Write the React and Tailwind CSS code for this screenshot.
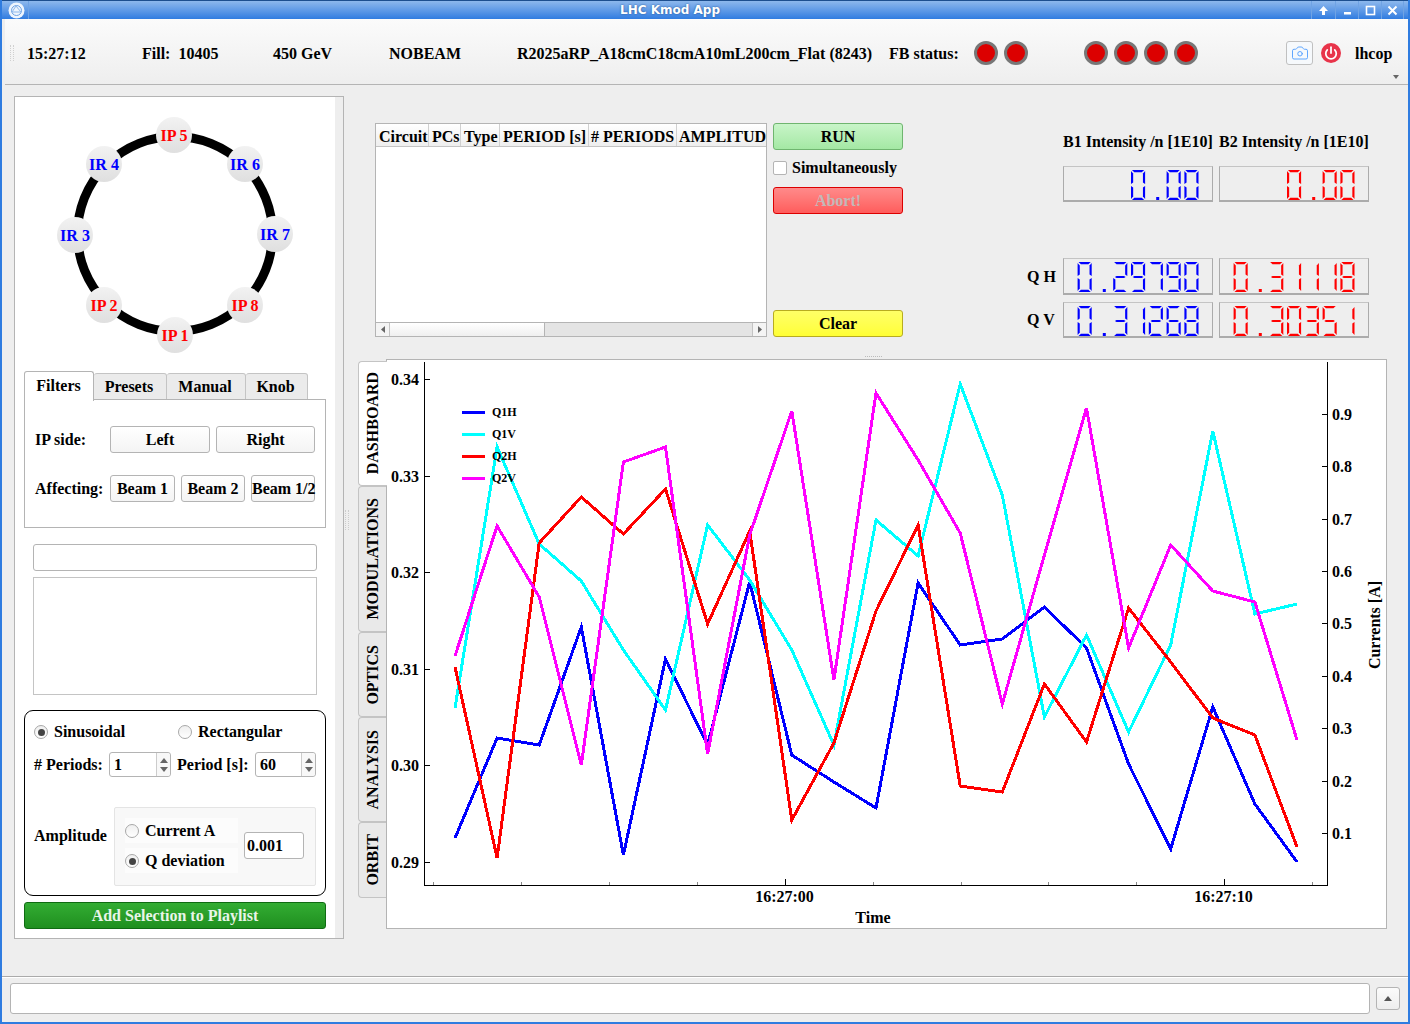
import React from 'react';
import { Camera, Power } from 'lucide-react';

const xs = Array.from({ length: 21 }, (_, i) => 455 + i * 42.1);

const series = [
    { color: '#0000ff', ys: [838, 738, 745, 627, 855, 659, 745, 582, 755, 782, 808, 583, 645, 639, 607, 648, 764, 849, 707, 804, 862] },
    { color: '#00ffff', ys: [708, 447, 544, 581, 650, 710, 525, 580, 650, 745, 520, 556, 384, 495, 717, 635, 732, 645, 431, 614, 604] },
    { color: '#ff0000', ys: [667, 858, 543, 497, 534, 489, 624, 531, 820, 743, 611, 525, 786, 792, 684, 742, 608, 662, 718, 735, 847] },
    { color: '#ff00ff', ys: [656, 526, 597, 765, 462, 447, 754, 535, 411, 680, 393, 460, 533, 704, 555, 408, 648, 545, 591, 602, 740] },
];

const legend = [
    { label: 'Q1H', color: '#0000ff', y: 412 },
    { label: 'Q1V', color: '#00ffff', y: 434 },
    { label: 'Q2H', color: '#ff0000', y: 456 },
    { label: 'Q2V', color: '#ff00ff', y: 478 },
];

const leftTicks = [['0.34', 379], ['0.33', 476], ['0.32', 572], ['0.31', 669], ['0.30', 765], ['0.29', 862]];
const rightTicks = [['0.9', 414], ['0.8', 466], ['0.7', 519], ['0.6', 571], ['0.5', 623], ['0.4', 676], ['0.3', 728], ['0.2', 781], ['0.1', 833]];
const bottomTicks = [433, 521, 609, 697, 785, 873, 961, 1048, 1136, 1224, 1312];

const ringNodes = [
    { label: 'IP 5', text: 'text-[#ff0000]', pos: 'left-[141px] top-[20px]' },
    { label: 'IR 4', text: 'text-[#0000ff]', pos: 'left-[71px] top-[49px]' },
    { label: 'IR 6', text: 'text-[#0000ff]', pos: 'left-[212px] top-[49px]' },
    { label: 'IR 3', text: 'text-[#0000ff]', pos: 'left-[42px] top-[120px]' },
    { label: 'IR 7', text: 'text-[#0000ff]', pos: 'left-[242px] top-[119px]' },
    { label: 'IP 2', text: 'text-[#ff0000]', pos: 'left-[71px] top-[190px]' },
    { label: 'IP 8', text: 'text-[#ff0000]', pos: 'left-[212px] top-[190px]' },
    { label: 'IP 1', text: 'text-[#ff0000]', pos: 'left-[142px] top-[220px]' },
];

const plotTabs = [
    { label: 'MODULATIONS', h: 'h-[146px]' },
    { label: 'OPTICS', h: 'h-[85px]' },
    { label: 'ANALYSIS', h: 'h-[105px]' },
    { label: 'ORBIT', h: 'h-[76px]' },
];

const tableCols = [
    { label: 'Circuit', w: 'w-[53px] pl-[3px]' },
    { label: 'PCs', w: 'w-[32px] pl-[3px]' },
    { label: 'Type', w: 'w-[39px] pl-[3px]' },
    { label: 'PERIOD [s]', w: 'w-[89px] pl-[3px]' },
    { label: '# PERIODS', w: 'w-[88px] pl-[2px]' },
    { label: 'AMPLITUDE', w: 'flex-1 pl-[2px]' },
];

// seven segment shapes for a 15x30 cell
const segments = {
    a: '1,0 14,0 11.5,2.3 3.5,2.3',
    b: '15,1 15,14 12.7,12.5 12.7,3.5',
    c: '15,16 15,29 12.7,26.5 12.7,17.5',
    d: '1,30 14,30 11.5,27.7 3.5,27.7',
    e: '0,16 0,29 2.3,26.5 2.3,17.5',
    f: '0,1 0,14 2.3,12.5 2.3,3.5',
    g: '1.8,15 3.5,13.9 11.5,13.9 13.2,15 11.5,16.1 3.5,16.1',
};

const digitSegments = {
    0: 'abcdef',
    1: 'bc',
    2: 'abged',
    3: 'abgcd',
    4: 'fgbc',
    5: 'afgcd',
    6: 'afgcde',
    7: 'abc',
    8: 'abcdefg',
    9: 'abcdfg',
};

const LcdNumber = ({ value, color, height }) => {
    const chars = value.split('');
    return (
        <div className={`relative w-[150px] ${height} border border-[#ababab] border-b-2 border-t-[#c4c4c4]`}>
            <svg width="148" height="33" aria-hidden="true">
                {chars.map((ch, i) => {
                    const x = 119.8 - (chars.length - 1 - i) * 17.8;
                    if (ch === '.') {
                        return <rect key={i} x={x + 8} y="30" width="3" height="3" fill={color} />;
                    }
                    return (
                        <g key={i} transform={`translate(${x + 0.6} 3) scale(0.94 1)`}>
                            {digitSegments[ch].split('').map((s) => (
                                <polygon key={s} points={segments[s]} fill={color} />
                            ))}
                        </g>
                    );
                })}
            </svg>
            {/* the reading itself stays selectable text on top of the segments */}
            <span className="absolute inset-0 flex items-center justify-end pr-[12px] text-transparent select-text">{value}</span>
        </div>
    );
};

const Led = () => (
    <div className="w-[24px] h-[24px] rounded-full border-[3px] border-[#777777] bg-[#dc0000] shrink-0" />
);

const Radio = ({ checked }) => (
    <span className="w-[14px] h-[14px] rounded-full border border-[#a8a8a8] bg-gradient-to-b from-[#efefef] to-white flex items-center justify-center shrink-0">
        {checked && <span className="w-[7px] h-[7px] rounded-full bg-[#444444]" />}
    </span>
);

const Spin = ({ value, width }) => (
    <div className={`${width} h-[25px] border border-[#b4b4b4] rounded-[3px] bg-white flex items-center`}>
        <span className="flex-1 pl-[4px]">{value}</span>
        <div className="w-[14px] h-full border-l border-[#cccccc] flex flex-col items-center justify-center gap-[4px] bg-[#f8f8f8] rounded-r-[3px]">
            <svg width="8" height="5"><path d="M4 0 L8 5 L0 5 Z" fill="#666666" /></svg>
            <svg width="8" height="5"><path d="M0 0 L8 0 L4 5 Z" fill="#666666" /></svg>
        </div>
    </div>
);

const PlainButton = ({ label, width }) => (
    <button className={`${width} h-[27px] border border-[#b4b4b4] rounded-[3px] bg-gradient-to-b from-white to-[#f4f4f4] whitespace-nowrap font-bold`}>
        {label}
    </button>
);

const Chart = () => (
    <svg width="999" height="568" className="block">
        <g transform="translate(-387 -360)" fontFamily="Liberation Serif, serif" fontWeight="700">
            <path d="M424.5 362 V885.5 H1327.5 V362" fill="none" stroke="#000000" strokeWidth="1" shapeRendering="crispEdges" />
            {leftTicks.map(([label, y]) => (
                <g key={label}>
                    <line x1="425" x2="430" y1={y + 0.5} y2={y + 0.5} stroke="#000000" shapeRendering="crispEdges" />
                    <text x="391" y={y + 6} fontSize="16">{label}</text>
                </g>
            ))}
            {rightTicks.map(([label, y]) => (
                <g key={label}>
                    <line x1="1322" x2="1327" y1={y + 0.5} y2={y + 0.5} stroke="#000000" shapeRendering="crispEdges" />
                    <text x="1332" y={y + 6} fontSize="16">{label}</text>
                </g>
            ))}
            {bottomTicks.map((x) => {
                const major = x === 785 || x === 1224;
                return (
                    <line key={x} x1={x + 0.5} x2={x + 0.5} y1={major ? 879 : 882} y2="885" stroke={major ? '#000000' : '#888888'} shapeRendering="crispEdges" />
                );
            })}
            {series.map((s) => (
                <polyline
                    key={s.color}
                    points={s.ys.map((y, i) => `${xs[i]},${y}`).join(' ')}
                    fill="none"
                    stroke={s.color}
                    strokeWidth="3"
                    strokeLinejoin="miter"
                    shapeRendering="crispEdges"
                />
            ))}
            {legend.map((item) => (
                <g key={item.label}>
                    <line x1="462" x2="485" y1={item.y} y2={item.y} stroke={item.color} strokeWidth="3" shapeRendering="crispEdges" />
                    <text x="492" y={item.y + 4} fontSize="12">{item.label}</text>
                </g>
            ))}
            <text x="784.5" y="902" fontSize="16" textAnchor="middle">16:27:00</text>
            <text x="1223.5" y="902" fontSize="16" textAnchor="middle">16:27:10</text>
            <text x="873" y="923" fontSize="16" textAnchor="middle">Time</text>
            <text x="1380" y="625" fontSize="16" textAnchor="middle" transform="rotate(-90 1380 625)">Currents [A]</text>
        </g>
    </svg>
);

const TitleBar = () => (
    <div className="h-[19px] -mx-[2px] flex items-center bg-gradient-to-b from-[#8db8ec] to-[#2f7ce0] border-t border-[#1d4f8f] shrink-0">
        <div className="w-[29px] h-full border-r border-[#6fa3e4] flex items-center justify-end pr-[3px]">
            <svg width="17" height="17" viewBox="0 0 17 17">
                <circle cx="8.5" cy="8.5" r="8" fill="#eef5fd" />
                <circle cx="8.5" cy="8.5" r="5" fill="none" stroke="#6fa3e4" strokeWidth="1" />
                <path d="M4 10 L8 4 L13 10 Z" fill="none" stroke="#8db8ec" strokeWidth="1" />
            </svg>
        </div>
        <div className="flex-1 text-center text-white font-bold text-[12px] leading-none font-['DejaVu_Sans',sans-serif] [text-shadow:0_0_2px_#1d4f8f]">
            LHC Kmod App
        </div>
        <div className="flex h-full mr-[6px]">
            <div className="w-[24px] border-l border-[#6fa3e4] flex items-center justify-center">
                <svg width="11" height="11" viewBox="0 0 11 11"><path d="M5.5 1 L10 6 H7 V10 H4 V6 H1 Z" fill="#ffffff" /></svg>
            </div>
            <div className="w-[23px] border-l border-[#6fa3e4] flex items-center justify-center">
                <svg width="11" height="11" viewBox="0 0 11 11"><rect x="2" y="7" width="7" height="2.5" fill="#ffffff" /></svg>
            </div>
            <div className="w-[23px] border-l border-[#6fa3e4] flex items-center justify-center">
                <svg width="11" height="11" viewBox="0 0 11 11"><rect x="1.5" y="1.5" width="8" height="8" fill="none" stroke="#ffffff" strokeWidth="1.6" /></svg>
            </div>
            <div className="w-[23px] border-x border-[#6fa3e4] flex items-center justify-center">
                <svg width="11" height="11" viewBox="0 0 11 11"><path d="M1.5 1.5 L9.5 9.5 M9.5 1.5 L1.5 9.5" stroke="#ffffff" strokeWidth="2" /></svg>
            </div>
        </div>
    </div>
);

const Toolbar = () => (
    <div className="h-[66px] shrink-0 ml-[3px] pt-[2px] flex items-center bg-gradient-to-b from-[#fbfbfb] to-[#eeeeee] border-b border-[#b4b4b4] relative font-bold">
        <div className="w-[4px] h-[16px] ml-[5px] mr-[13px] border-x border-dotted border-[#d0d0d0]" />
        <span className="w-[115px] pt-[2px]">15:27:12</span>
        <span className="w-[131px] pt-[2px] whitespace-pre">Fill:  10405</span>
        <span className="w-[116px] pt-[2px]">450 GeV</span>
        <span className="w-[128px] pt-[2px]">NOBEAM</span>
        <span className="w-[372px] pt-[2px] whitespace-nowrap">R2025aRP_A18cmC18cmA10mL200cm_Flat (8243)</span>
        <span className="w-[85px] pt-[2px] whitespace-nowrap">FB status:</span>
        <div className="flex gap-[6px]">
            <Led />
            <Led />
        </div>
        <div className="flex gap-[6px] ml-[56px]">
            <Led />
            <Led />
            <Led />
            <Led />
        </div>
        <button className="w-[27px] h-[24px] ml-[88px] border border-[#c0c0c0] rounded-[3px] bg-[#f6f9fc] flex items-center justify-center">
            <Camera size={18} strokeWidth={1.2} color="#4f9dff" />
        </button>
        <div className="w-[20px] h-[20px] ml-[8px] rounded-full bg-[#e8344a] flex items-center justify-center">
            <Power size={14} strokeWidth={3} color="#ffffff" />
        </div>
        <span className="ml-[14px] pt-[2px]">lhcop</span>
        <svg width="6" height="4" className="absolute right-[9px] bottom-[5px]"><path d="M0 0 H6 L3 4 Z" fill="#666666" /></svg>
    </div>
);

const LeftPanel = () => (
    <div className="w-[330px] h-[843px] ml-[12px] mt-[11px] border border-[#b4b4b4] flex shrink-0 font-bold">
        <div className="w-[320px] bg-white flex flex-col">
            <div className="relative h-[273px] shrink-0">
                <svg width="320" height="273">
                    <circle cx="160" cy="137" r="97.5" fill="none" stroke="#000000" strokeWidth="9" />
                </svg>
                {ringNodes.map((node) => (
                    <div
                        key={node.label}
                        className={`absolute ${node.pos} w-[36px] h-[36px] pt-[2px] rounded-full bg-gradient-to-b from-[#f2f2f2] to-[#dfdfdf] flex items-center justify-center whitespace-nowrap ${node.text}`}
                    >
                        {node.label}
                    </div>
                ))}
            </div>

            <div className="flex items-end h-[30px] ml-[9px] shrink-0">
                <div className="w-[70px] h-[30px] pb-[2px] pr-[1px] border border-b-0 border-[#b4b4b4] rounded-t-[3px] bg-white flex items-center justify-center relative z-10 -mb-px">Filters</div>
                <div className="w-[73px] h-[27px] pr-[2px] border border-l-0 border-[#c4c4c4] rounded-t-[3px] bg-[#ebebeb] flex items-center justify-center">Presets</div>
                <div className="w-[79px] h-[27px] pr-[2px] border border-l-0 border-[#c4c4c4] rounded-t-[3px] bg-[#ebebeb] flex items-center justify-center">Manual</div>
                <div className="w-[62px] h-[27px] pr-[2px] border border-l-0 border-[#c4c4c4] rounded-t-[3px] bg-[#ebebeb] flex items-center justify-center">Knob</div>
            </div>
            <div className="w-[302px] h-[129px] ml-[9px] -mt-px border border-[#b4b4b4] shrink-0 pt-[26px] pl-[10px]">
                <div className="flex items-center h-[27px]">
                    <span className="w-[75px]">IP side:</span>
                    <PlainButton label="Left" width="w-[100px]" />
                    <span className="w-[6px]" />
                    <PlainButton label="Right" width="w-[99px]" />
                </div>
                <div className="flex items-center h-[27px] mt-[22px]">
                    <span className="w-[75px] whitespace-nowrap">Affecting:</span>
                    <PlainButton label="Beam 1" width="w-[65px]" />
                    <span className="w-[6px]" />
                    <PlainButton label="Beam 2" width="w-[64px]" />
                    <span className="w-[6px]" />
                    <PlainButton label="Beam 1/2" width="w-[64px]" />
                </div>
            </div>

            <div className="w-[284px] h-[27px] ml-[18px] mt-[16px] border border-[#b4b4b4] rounded-[3px] shrink-0" />
            <div className="w-[284px] h-[118px] ml-[18px] mt-[6px] border border-[#c4c4c4] shrink-0" />

            <div className="w-[302px] h-[186px] ml-[9px] mt-[15px] border border-black rounded-[9px] shrink-0 pl-[9px] pt-[14px]">
                <div className="flex items-center h-[14px]">
                    <Radio checked />
                    <span className="ml-[6px] w-[124px]">Sinusoidal</span>
                    <Radio />
                    <span className="ml-[6px]">Rectangular</span>
                </div>
                <div className="flex items-center h-[25px] mt-[13px]">
                    <span className="w-[75px] whitespace-nowrap"># Periods:</span>
                    <Spin value="1" width="w-[62px]" />
                    <span className="w-[84px] pl-[6px] whitespace-nowrap">Period [s]:</span>
                    <Spin value="60" width="w-[61px]" />
                </div>
                <div className="flex items-center mt-[30px]">
                    <span className="w-[80px] pb-[22px]">Amplitude</span>
                    <div className="w-[202px] h-[79px] border border-[#e4e4e4] rounded-[2px] bg-[#f8f8f8] flex items-center pl-[10px]">
                        <div className="w-[113px] -mt-[2px] flex flex-col gap-[5px]">
                            <div className="h-[25px] flex items-center bg-[#fcfcfc]">
                                <Radio />
                                <span className="ml-[6px]">Current A</span>
                            </div>
                            <div className="h-[25px] pt-[1px] flex items-center bg-[#fcfcfc]">
                                <Radio checked />
                                <span className="ml-[6px]">Q deviation</span>
                            </div>
                        </div>
                        <div className="w-[60px] h-[27px] ml-[6px] -mt-[2px] border border-[#b4b4b4] rounded-[3px] bg-white flex items-center pl-[2px]">0.001</div>
                    </div>
                </div>
            </div>

            <button className="w-[302px] h-[27px] ml-[9px] mt-[6px] border border-[#0f6b12] rounded-[3px] bg-gradient-to-b from-[#33ad33] to-[#1f8f1f] text-[#e8f5e8] shrink-0">
                Add Selection to Playlist
            </button>
        </div>
        <div className="flex-1 bg-[#eeeeee]" />
    </div>
);

const TopPanel = () => (
    <div className="h-[263px] flex pt-[27px] pl-[17px] relative shrink-0 font-bold">
        <div className="w-[392px] h-[214px] border border-[#b4b4b4] bg-white flex flex-col shrink-0">
            <div className="h-[23px] flex border-b border-[#c4c4c4] bg-gradient-to-b from-white to-[#eeeeee] overflow-hidden whitespace-nowrap">
                {tableCols.map((col) => (
                    <div key={col.label} className={`${col.w} pt-[4px] border-r last:border-r-0 border-[#d0d0d0] flex items-center overflow-hidden shrink-0`}>
                        {col.label}
                    </div>
                ))}
            </div>
            <div className="flex-1" />
            <div className="h-[14px] flex border-t border-[#b4b4b4] bg-[#e4e4e4]">
                <div className="w-[14px] bg-[#f4f4f4] border-r border-[#c4c4c4] flex items-center justify-center">
                    <svg width="4" height="7"><path d="M4 0 V7 L0 3.5 Z" fill="#666666" /></svg>
                </div>
                <div className="w-[155px] bg-gradient-to-b from-white to-[#efefef] border-r border-[#b4b4b4]" />
                <div className="flex-1" />
                <div className="w-[14px] bg-[#f4f4f4] border-l border-[#c4c4c4] flex items-center justify-center">
                    <svg width="4" height="7"><path d="M0 0 V7 L4 3.5 Z" fill="#666666" /></svg>
                </div>
            </div>
        </div>

        <div className="w-[130px] h-[214px] ml-[6px] flex flex-col shrink-0">
            <button className="h-[27px] border border-[#6fb56f] rounded-[3px] bg-gradient-to-b from-[#c8f5c8] to-[#a4e8a4] font-bold">RUN</button>
            <div className="flex items-center h-[14px] mt-[11px]">
                <span className="w-[14px] h-[14px] border border-[#b4b4b4] rounded-[2px] bg-white" />
                <span className="ml-[5px] whitespace-nowrap">Simultaneously</span>
            </div>
            <button className="h-[27px] mt-[12px] border border-[#dc0000] rounded-[3px] bg-gradient-to-b from-[#ff8a8a] to-[#ff5c5c] text-[#c4b8b8] font-bold">Abort!</button>
            <button className="h-[27px] mt-auto border border-[#b8ac20] rounded-[3px] bg-gradient-to-b from-[#ffff66] to-[#ffff33] font-bold">Clear</button>
        </div>

        <div className="w-[342px] ml-[124px] shrink-0">
            <div className="flex pl-[36px] mt-[10px] h-[18px] items-center gap-[6px] whitespace-nowrap">
                <span className="w-[150px]">B1 Intensity /n [1E10]</span>
                <span className="w-[150px]">B2 Intensity /n [1E10]</span>
            </div>
            <div className="flex pl-[36px] mt-[15px] gap-[6px]">
                <LcdNumber value="0.00" color="#0000ff" height="h-[36px]" />
                <LcdNumber value="0.00" color="#ff0000" height="h-[36px]" />
            </div>
            <div className="flex items-center mt-[56px] gap-[6px]">
                <span className="w-[30px] whitespace-nowrap">Q H</span>
                <LcdNumber value="0.29790" color="#0000ff" height="h-[37px]" />
                <LcdNumber value="0.31118" color="#ff0000" height="h-[37px]" />
            </div>
            <div className="flex items-center mt-[7px] gap-[6px]">
                <span className="w-[30px] whitespace-nowrap">Q V</span>
                <LcdNumber value="0.31268" color="#0000ff" height="h-[36px]" />
                <LcdNumber value="0.30351" color="#ff0000" height="h-[36px]" />
            </div>
        </div>

        <div className="absolute left-[507px] bottom-[2px] w-[17px] h-[1px] border-t border-dotted border-[#bbbbbb]" />
    </div>
);

const PlotPanel = () => (
    <div className="flex h-[570px] shrink-0 font-bold">
        <div className="w-[28px] flex flex-col items-end pt-[2px] shrink-0">
            <div className="w-[29px] h-[125px] -mr-px relative z-10 border border-r-0 border-[#c4c4c4] rounded-l-[4px] bg-white flex items-center justify-center">
                <span className="[writing-mode:vertical-rl] rotate-180 whitespace-nowrap">DASHBOARD</span>
            </div>
            {plotTabs.map((tab) => (
                <div key={tab.label} className={`w-[28px] ${tab.h} pl-[1px] border border-r-0 border-[#c4c4c4] rounded-l-[4px] bg-[#e9e9e9] flex items-center justify-center`}>
                    <span className="[writing-mode:vertical-rl] rotate-180 whitespace-nowrap">{tab.label}</span>
                </div>
            ))}
        </div>
        <div className="w-[1001px] border border-[#b4b4b4] bg-white">
            <Chart />
        </div>
    </div>
);

const BottomBar = () => (
    <div className="flex-1 border-t border-[#aaaaaa] flex items-start pt-[6px] pl-[8px] shadow-[inset_0_1px_0_#ffffff]">
        <div className="w-[1360px] h-[31px] border border-[#b4b4b4] rounded-[3px] bg-white" />
        <button className="w-[24px] h-[23px] ml-[6px] mt-[4px] border border-[#b4b4b4] rounded-[3px] bg-gradient-to-b from-[#fbfbfb] to-[#eeeeee] flex items-center justify-center">
            <svg width="8" height="5"><path d="M4 0 L8 5 H0 Z" fill="#555555" /></svg>
        </button>
    </div>
);

const App = () => (
    <div className="w-[1410px] h-[1024px] overflow-hidden flex flex-col bg-[#eeeeee] text-black text-[16px] leading-[18px] font-['Liberation_Serif',serif] border-x-2 border-b-2 border-[#2f7ce0]">
        <TitleBar />
        <Toolbar />
        <div className="h-[891px] flex shrink-0">
            <LeftPanel />
            <div className="w-[14px] shrink-0 pt-[425px] pl-[1px]">
                <div className="w-[4px] h-[20px] border-x border-dotted border-[#cccccc]" />
            </div>
            <div className="mt-[11px] w-[1029px] flex flex-col">
                <TopPanel />
                <PlotPanel />
            </div>
        </div>
        <BottomBar />
    </div>
);

export default App;
